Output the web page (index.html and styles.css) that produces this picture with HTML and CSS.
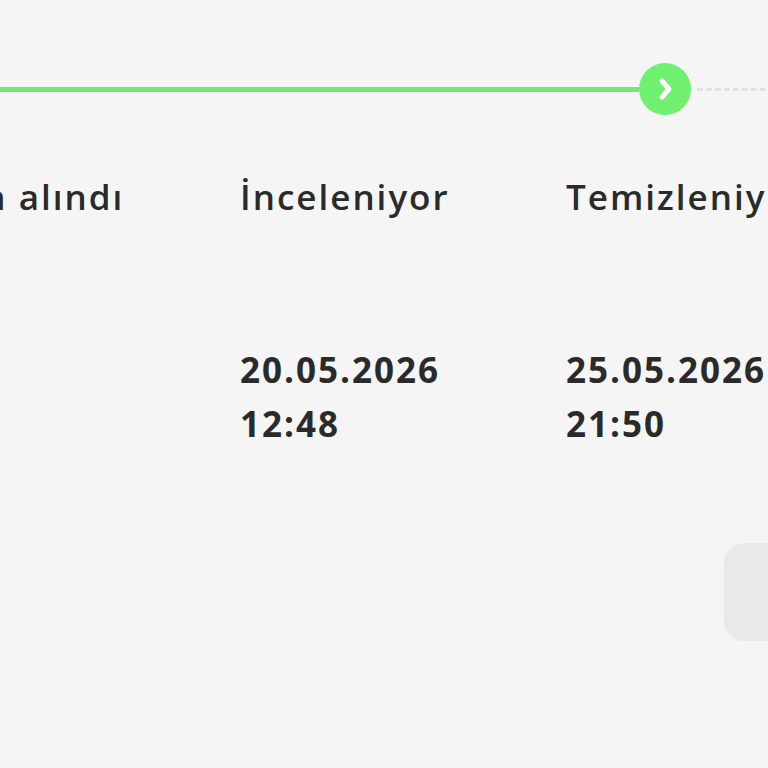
FILE: index.html
```html
<!DOCTYPE html>
<html lang="tr">
<head>
<meta charset="utf-8">
<link rel="stylesheet" href="styles.css">
</head>
<body>
<div class="page">
  <div class="track">
    <div class="line-done"></div>
    <div class="node">
      <svg width="20" height="24" viewBox="0 0 20 24"><path d="M7 4 L14 12 L7 20" fill="none" stroke="#fff" stroke-width="5" stroke-linecap="round" stroke-linejoin="round"/></svg>
    </div>
    <div class="line-todo"></div>
  </div>
  <div class="steps">
    <div class="step">
      <div class="title">Ürün alındı</div>
      <div class="date"></div>
    </div>
    <div class="step">
      <div class="title">İnceleniyor</div>
      <div class="date">20.05.2026<br>12:48</div>
    </div>
    <div class="step">
      <div class="title">Temizleniyor</div>
      <div class="date">25.05.2026<br>21:50</div>
    </div>
  </div>
  <div class="actions">
    <div class="btn"></div>
  </div>
</div>
</body>
</html>
```
FILE: styles.css
```css
html, body {
  margin: 0;
  padding: 0;
  background: #f5f5f5;
  overflow: hidden;
}
.page {
  width: 768px;
  height: 768px;
  overflow: hidden;
  font-family: "Open Sans", "DejaVu Sans", sans-serif;
  color: #2a2a2a;
}
.track {
  display: flex;
  align-items: center;
  height: 52px;
  margin-top: 63px;
  width: 900px;
}
.line-done {
  width: 639px;
  height: 5px;
  background: #72e872;
}
.node {
  width: 52px;
  height: 52px;
  border-radius: 50%;
  background: #6ff06f;
  display: flex;
  align-items: center;
  justify-content: center;
  flex: none;
}
.line-todo {
  flex: 1;
  margin-left: 6px;
  border-top: 3px dashed #e2e2e2;
}
.steps {
  display: flex;
  margin-left: -86px;
  margin-top: 58px;
  width: 1100px;
}
.step {
  width: 326px;
  flex: none;
}
.title {
  font-size: 35px;
  font-weight: 600;
  line-height: 48px;
  letter-spacing: 2px;
  white-space: nowrap;
}
.date {
  margin-top: 122px;
  font-size: 35px;
  font-weight: 700;
  line-height: 54px;
  letter-spacing: 2px;
}
.actions {
  display: flex;
  justify-content: flex-end;
  margin-top: 92px;
}
.btn {
  width: 60px;
  height: 98px;
  margin-right: -16px;
  background: #e9e9e9;
  border-radius: 20px;
}
```
